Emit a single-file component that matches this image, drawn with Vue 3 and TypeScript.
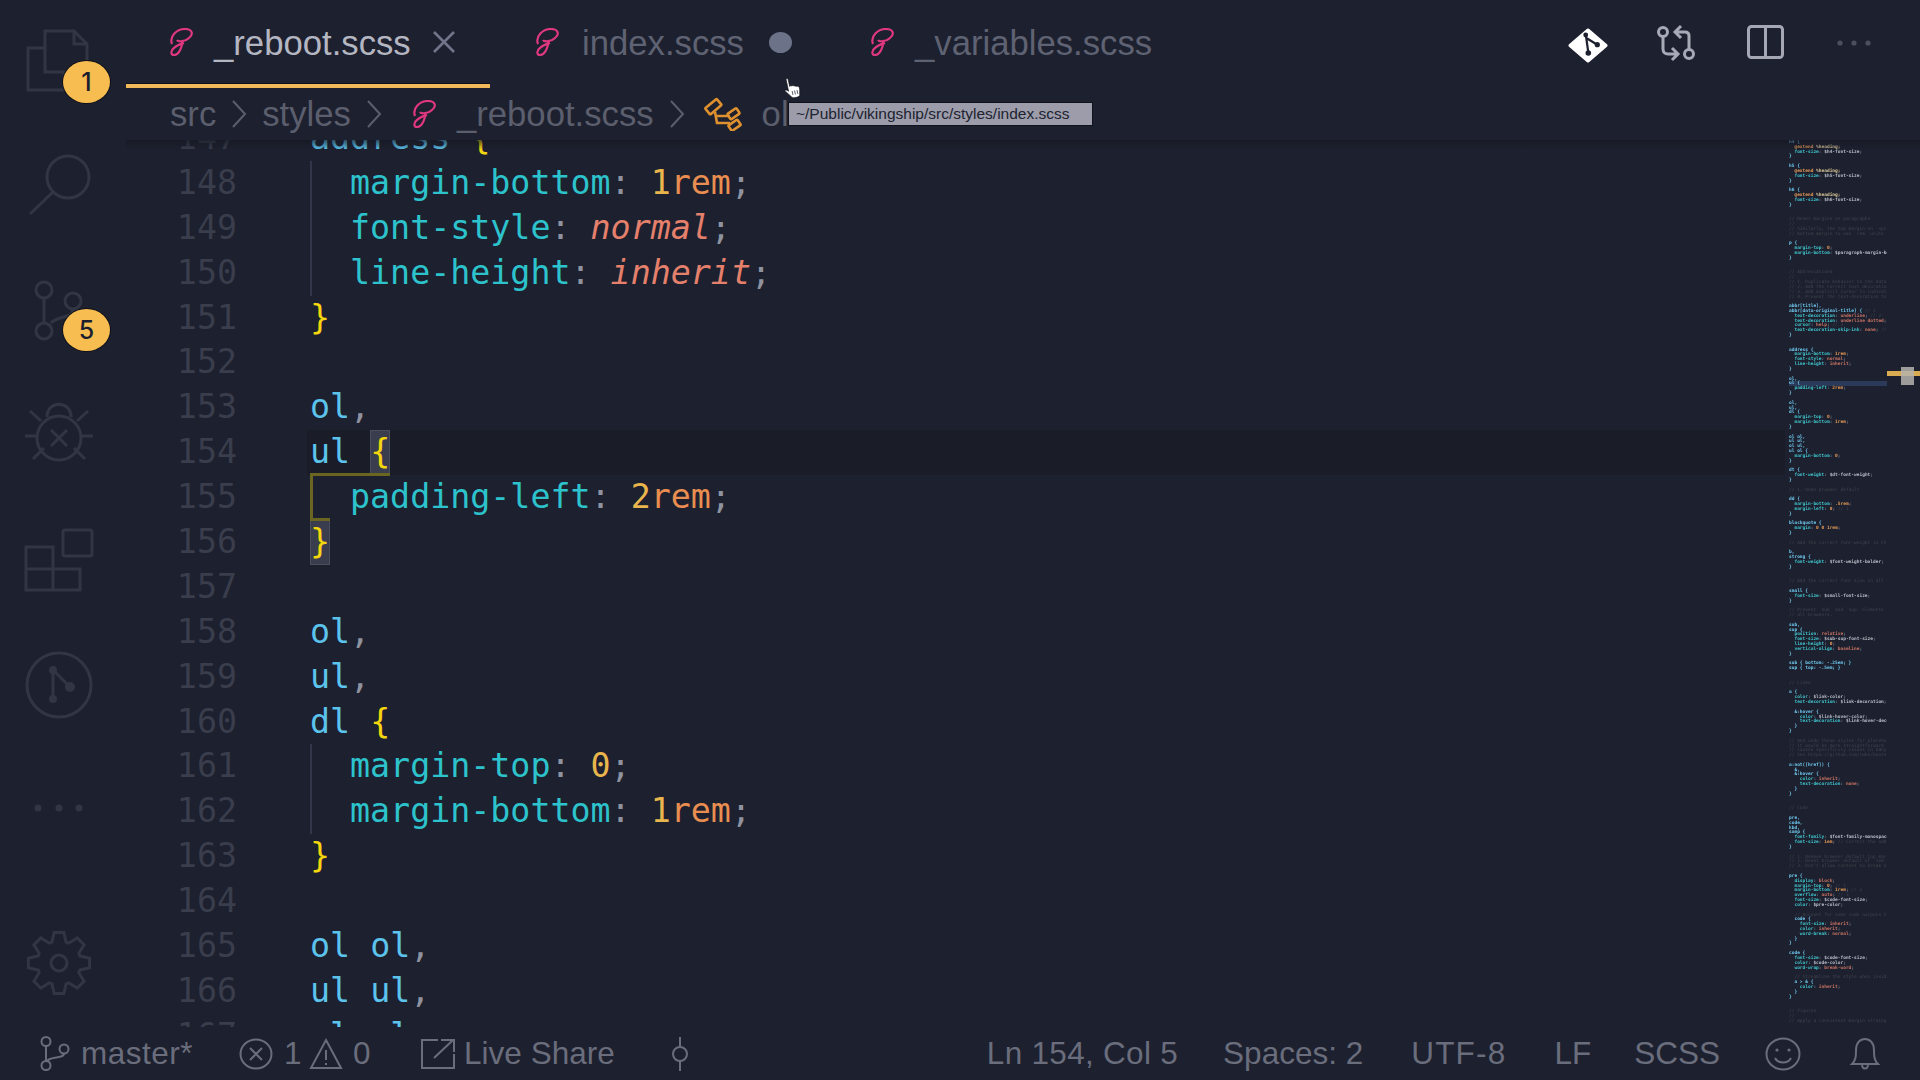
<script setup lang="ts">
type Tok = { t: string; c: string }
type Line = { n: number; toks: Tok[]; indent?: boolean; guideActive?: boolean; current?: boolean }

const T = (t: string, c: string): Tok => ({ t, c })
const sel = (s: string, tail: string, n: number): Line => ({ n, toks: [T(s, 'sel'), T(tail, 'pun')] })
const open = (s: string, n: number, match = false): Line => ({ n, toks: [T(s + ' ', 'sel'), T('{', match ? 'brc match' : 'brc')], current: match })
const close = (n: number, match = false): Line => ({ n, toks: [T('}', match ? 'brc match' : 'brc')] })
const blank = (n: number): Line => ({ n, toks: [] })
const num = (name: string, a: string, b: string, n: number, active = false): Line => ({
  n, indent: true, guideActive: active,
  toks: [T(name, 'prop'), T(': ', 'pun'), T(a, 'num'), T(b, 'unit'), T(';', 'pun')]
})
const word = (name: string, v: string, n: number): Line => ({
  n, indent: true, toks: [T(name, 'prop'), T(': ', 'pun'), T(v, 'val'), T(';', 'pun')]
})

const lines: Line[] = [
  open('address', 147),
  num('margin-bottom', '1', 'rem', 148),
  word('font-style', 'normal', 149),
  word('line-height', 'inherit', 150),
  close(151),
  blank(152),
  sel('ol', ',', 153),
  open('ul', 154, true),
  num('padding-left', '2', 'rem', 155, true),
  close(156, true),
  blank(157),
  sel('ol', ',', 158),
  sel('ul', ',', 159),
  open('dl', 160),
  num('margin-top', '0', '', 161),
  num('margin-bottom', '1', 'rem', 162),
  close(163),
  blank(164),
  sel('ol ol', ',', 165),
  sel('ul ul', ',', 166),
  sel('ol ul', ',', 167)
]

const source = `h4 {
  @extend %heading;
  font-size: $h4-font-size;
}

h5 {
  @extend %heading;
  font-size: $h5-font-size;
}

h6 {
  @extend %heading;
  font-size: $h6-font-size;
}


// Reset margins on paragraphs
//
// Similarly, the top margin on \`<p>\`s get reset. However, we also reset the
// bottom margin to use \`rem\` units instead of \`em\`.

p {
  margin-top: 0;
  margin-bottom: $paragraph-margin-bottom;
}


// Abbreviations
//
// 1. Duplicate behavior to the data-* attribute for our tooltip plugin
// 2. Add the correct text decoration in Chrome, Edge, IE, Opera, and Safari.
// 3. Add explicit cursor to indicate changed behavior.
// 4. Prevent the text-decoration to be skipped.

abbr[title],
abbr[data-original-title] { // 1
  text-decoration: underline; // 2
  text-decoration: underline dotted; // 2
  cursor: help; // 3
  text-decoration-skip-ink: none; // 4
}


address {
  margin-bottom: 1rem;
  font-style: normal;
  line-height: inherit;
}

ol,
ul {
  padding-left: 2rem;
}

ol,
ul,
dl {
  margin-top: 0;
  margin-bottom: 1rem;
}

ol ol,
ul ul,
ol ul,
ul ol {
  margin-bottom: 0;
}

dt {
  font-weight: $dt-font-weight;
}

// 1. Undo browser default

dd {
  margin-bottom: .5rem;
  margin-left: 0; // 1
}

blockquote {
  margin: 0 0 1rem;
}

// Add the correct font-weight in Chrome, Edge, and Safari

b,
strong {
  font-weight: $font-weight-bolder;
}


// Add the correct font size in all browsers

small {
  font-size: $small-font-size;
}

// Prevent \`sub\` and \`sup\` elements from affecting the line height in
// all browsers.

sub,
sup {
  position: relative;
  font-size: $sub-sup-font-size;
  line-height: 0;
  vertical-align: baseline;
}

sub { bottom: -.25em; }
sup { top: -.5em; }


// Links

a {
  color: $link-color;
  text-decoration: $link-decoration;

  &:hover {
    color: $link-hover-color;
    text-decoration: $link-hover-decoration;
  }
}

// And undo these styles for placeholder links/named anchors (without href).
// It would be more straightforward to just use a[href] in previous block, but that
// causes specificity issues in many other styles that are too complex to fix.
// See https://github.com/twbs/bootstrap/issues/19402

a:not([href]) {
  &,
  &:hover {
    color: inherit;
    text-decoration: none;
  }
}


// Code

pre,
code,
kbd,
samp {
  font-family: $font-family-monospace;
  font-size: 1em; // Correct the odd \`em\` font sizing in all browsers.
}

// 1. Remove browser default top margin
// 2. Reset browser default of \`1em\` to use \`rem\`s
// 3. Don't allow content to break outside

pre {
  display: block;
  margin-top: 0; // 1
  margin-bottom: 1rem; // 2
  overflow: auto; // 3
  font-size: $code-font-size;
  color: $pre-color;

  // Account for some code outputs that place code tags in pre tags
  code {
    font-size: inherit;
    color: inherit;
    word-break: normal;
  }
}

code {
  font-size: $code-font-size;
  color: $code-color;
  word-wrap: break-word;

  // Streamline the style when inside anchors to avoid broken underline and more
  a > & {
    color: inherit;
  }
}


// Figures
//
// Apply a consistent margin strategy (matches our type scale).`

function tokenize(line: string): Tok[] {
  if (!line.trim()) return []
  const lead = line.match(/^\s*/)?.[0] ?? ''
  const body = line.slice(lead.length)
  const out: Tok[] = lead ? [T(lead, 'm-pun')] : []
  if (body.startsWith('//')) return [...out, T(body, 'm-com')]
  if (body.startsWith('@extend')) return [...out, T('@extend ', 'm-unit'), T(body.slice(8), 'm-ext')]
  const m = body.match(/^([a-z-]+)(:\s+)([^;]*)(;?)(.*)$/)
  if (m && !body.includes('{')) {
    const v = m[3].startsWith('$') ? 'm-var' : /^[\d.-]/.test(m[3]) ? 'm-unit' : 'm-val'
    return [...out, T(m[1], 'm-prop'), T(m[2], 'm-pun'), T(m[3], v), T(m[4], 'm-pun'), T(m[5], 'm-com')]
  }
  const c = body.indexOf('//')
  if (c > 0) return [...out, T(body.slice(0, c), 'm-sel'), T(body.slice(c), 'm-com')]
  return [...out, T(body, 'm-sel')]
}

const miniLines = source.split('\n').map((s, i) => ({ id: i, toks: tokenize(s), hit: s === 'ul {' && i < 60 }))

function gearPath(): string {
  const cx = 35, cy = 33, teeth = 8
  const pts: string[] = []
  for (let i = 0; i < teeth; i++) {
    const a = (i / teeth) * Math.PI * 2 - Math.PI / 2
    const s = (Math.PI * 2) / teeth
    const p = (r: number, d: number) => `${(cx + r * Math.cos(a + d)).toFixed(1)} ${(cy + r * Math.sin(a + d)).toFixed(1)}`
    pts.push(`${p(22, -s * 0.42)} L${p(31, -s * 0.2)} L${p(31, s * 0.2)} L${p(22, s * 0.42)}`)
  }
  return 'M' + pts.join(' L') + ' Z'
}
const gear = gearPath()
</script>

<template>
  <div class="window">
    <div class="body">
      <aside class="activity">
        <div class="act">
          <svg viewBox="0 0 70 70" class="ico"><path d="M21 21H4V63H40V45M21 4H50L63 17V45H21ZM50 4V17H63" /></svg>
          <span class="badge">1</span>
        </div>
        <div class="act">
          <svg viewBox="0 0 70 70" class="ico"><circle cx="44" cy="26" r="21" /><path d="M29 41L6 63" /></svg>
        </div>
        <div class="act">
          <svg viewBox="0 0 70 70" class="ico"><circle cx="20" cy="15" r="8" /><circle cx="20" cy="56" r="8" /><circle cx="49" cy="26" r="8" /><path d="M20 23V48M49 34C49 44 34 40 27 48" /></svg>
          <span class="badge">5</span>
        </div>
        <div class="act">
          <svg viewBox="0 0 70 70" class="ico"><ellipse cx="35" cy="39" rx="22" ry="22" /><path d="M23 18C23 1 47 1 47 18M6 12L17 22M64 12L53 22M1 37H13M57 37H69M9 60L20 49M61 60L50 49M27 31L43 47M43 31L27 47" /></svg>
        </div>
        <div class="act">
          <svg viewBox="0 0 70 70" class="ico"><rect x="39" y="7" width="29" height="26" rx="2" /><path d="M2 24H29V67H2ZM2 46H56V67H29" /></svg>
        </div>
        <div class="act">
          <svg viewBox="0 0 70 70" class="ico"><circle cx="35" cy="38" r="32" /><path d="M29 23V52M29 23L46 40" /><circle cx="29" cy="23" r="4" class="fill" /><circle cx="46" cy="40" r="5" class="fill" /><circle cx="29" cy="52" r="4" class="fill" /></svg>
        </div>
        <div class="act">
          <svg viewBox="0 0 70 70" class="ico"><circle cx="14" cy="37" r="3.5" class="fill" /><circle cx="35" cy="37" r="3.5" class="fill" /><circle cx="55" cy="37" r="3.5" class="fill" /></svg>
        </div>
        <div class="act act-last">
          <svg viewBox="0 0 70 70" class="ico"><path :d="gear" /><circle cx="35" cy="33" r="8" /></svg>
        </div>
      </aside>

      <main class="main">
        <div class="tabs">
          <div class="tab tab-active">
            <svg viewBox="0 0 26 28" class="sass"><path d="M4 16C1 8 9 1 17 1C24 1 26 6 21 10C17 14 10 14 9 12M14 12C15 18 11 27 6 27C2 27 3 22 6 20C9 17 13 16 16 15" /></svg>
            <span class="tab-name">_reboot.scss</span>
            <svg viewBox="0 0 24 24" class="close"><path d="M2 2L22 22M22 2L2 22" /></svg>
          </div>
          <div class="tab tab-two">
            <svg viewBox="0 0 26 28" class="sass"><path d="M4 16C1 8 9 1 17 1C24 1 26 6 21 10C17 14 10 14 9 12M14 12C15 18 11 27 6 27C2 27 3 22 6 20C9 17 13 16 16 15" /></svg>
            <span class="tab-name dim">index.scss</span>
            <span class="dirty"></span>
          </div>
          <div class="tab">
            <svg viewBox="0 0 26 28" class="sass"><path d="M4 16C1 8 9 1 17 1C24 1 26 6 21 10C17 14 10 14 9 12M14 12C15 18 11 27 6 27C2 27 3 22 6 20C9 17 13 16 16 15" /></svg>
            <span class="tab-name dim">_variables.scss</span>
          </div>
          <div class="tab-actions">
            <svg viewBox="0 0 40 35" class="a-git">
              <path d="M20 2L38 17.5L20 33L2 17.5Z" class="dia" />
              <path d="M17.7 6L20.3 24.3M18.3 10L29.3 16.7" class="dia-line" />
              <circle cx="17.7" cy="7" r="2.4" class="dia-dot" /><circle cx="20.3" cy="25" r="2.8" class="dia-dot" /><circle cx="29.3" cy="16.700" r="2.6" class="dia-dot" />
            </svg>
            <svg viewBox="0 0 40 35" class="a-cmp">
              <circle cx="6" cy="5" r="4.500" /><circle cx="32" cy="27" r="4.500" />
              <path d="M6 10V22C6 25 8 27 11 27H21M15 21L21 27L15 33M32 22V9C32 6 30 5 28 5H18M24 -1L18 5L24 11" />
            </svg>
            <svg viewBox="0 0 37 34" class="a-split"><rect x="1.5" y="1.5" width="34" height="31" rx="3" /><path d="M18.5 1.5V32.5" /></svg>
            <svg viewBox="0 0 36 8" class="a-more"><circle cx="4" cy="4" r="2.6" /><circle cx="18" cy="4" r="2.6" /><circle cx="32" cy="4" r="2.6" /></svg>
          </div>
        </div>

        <div class="crumbs">
          <span>src</span>
          <svg viewBox="0 0 16 28" class="chev"><path d="M2 1L14 14L2 27" /></svg>
          <span>styles</span>
          <svg viewBox="0 0 16 28" class="chev"><path d="M2 1L14 14L2 27" /></svg>
          <svg viewBox="0 0 26 28" class="sass crumb-sass"><path d="M4 16C1 8 9 1 17 1C24 1 26 6 21 10C17 14 10 14 9 12M14 12C15 18 11 27 6 27C2 27 3 22 6 20C9 17 13 16 16 15" /></svg>
          <span class="crumb-file">_reboot.scss</span>
          <svg viewBox="0 0 16 28" class="chev"><path d="M2 1L14 14L2 27" /></svg>
          <svg viewBox="0 0 38 34" class="struct">
            <rect x="2" y="6" width="15" height="8" rx="1" transform="rotate(-40 9 10)" />
            <rect x="24" y="13.500" width="11" height="6.500" rx="1" transform="rotate(-35 29.500 16.700)" />
            <rect x="25" y="25" width="11" height="6.500" rx="1" transform="rotate(-35 30.500 28.200)" />
            <path d="M11 15L13 26H26M13 19H26" />
          </svg>
          <span class="crumb-ol">ol</span>
          <div class="tooltip">~/Public/vikingship/src/styles/index.scss</div>
          <svg viewBox="0 0 18 22" class="cursor">
            <path d="M5 1C6 0 7 1 7 2V9L8 8.500L9 9V8.500L11 9V9L13 10L15 10.500C16.500 11 16.500 13 16 15L15 20C14 21.500 8 21.500 7 20L2 13C1 11.500 2.500 11 4 12.500L5 13.500Z" />
            <path d="M8.500 14V18M11 14V18M13.500 14V18" class="cursor-lines" />
          </svg>
        </div>

        <div class="editor">
          <div class="lines">
            <div v-for="l in lines" :key="l.n" class="row">
              <span class="gutter">{{ l.n }}</span>
              <div class="code" :class="{ current: l.current }">
                <span v-if="l.indent" class="indent" :class="{ 'indent-active': l.guideActive }"></span>
                <span v-for="(tk, i) in l.toks" :key="i" :class="tk.c">{{ tk.t }}</span>
              </div>
            </div>
          </div>
          <div class="minimap">
            <div class="mini-text">
              <div v-for="m in miniLines" :key="m.id" class="mini-line" :class="{ hit: m.hit }">
                <span v-for="(tk, i) in m.toks" :key="i" :class="tk.c">{{ tk.t }}</span>
              </div>
            </div>
            <div class="ruler-mark"></div>
            <div class="ruler-slider"></div>
          </div>
        </div>
      </main>
    </div>

    <footer class="status">
      <svg viewBox="0 0 30 35" class="s-branch"><circle cx="7" cy="5.500" r="4.500" /><circle cx="7" cy="29.500" r="4.500" /><circle cx="25" cy="13" r="4.500" /><path d="M7 10V25M25 17.500C25 23 12 20 8 25" /></svg>
      <span class="s-master">master*</span>
      <svg viewBox="0 0 34 32" class="s-err"><ellipse cx="17" cy="16" rx="15.500" ry="14.500" /><path d="M11 10L23 22M23 10L11 22" /></svg>
      <span class="s-one">1</span>
      <svg viewBox="0 0 34 32" class="s-warn"><path d="M17 2L32 30H2ZM17 12V22M17 25V27" /></svg>
      <span class="s-zero">0</span>
      <svg viewBox="0 0 36 32" class="s-share"><path d="M18 2H2V30H34V16M14 20L33 2M21 2H34V14" /></svg>
      <span class="s-live">Live Share</span>
      <svg viewBox="0 0 18 34" class="s-commit"><circle cx="9" cy="17" r="7" /><path d="M9 0V10M9 24V34" /></svg>
      <div class="s-right">
        <span class="g-ln">Ln 154, Col 5</span>
        <span class="g-spaces">Spaces: 2</span>
        <span class="g-utf">UTF-8</span>
        <span class="g-lf">LF</span>
        <span class="g-scss">SCSS</span>
        <svg viewBox="0 0 36 34" class="s-smile"><ellipse cx="18" cy="17" rx="16.500" ry="15.500" /><path d="M10 21C13 27 23 27 26 21" /><circle cx="12" cy="13" r="1.600" class="s-fill" /><circle cx="24" cy="13" r="1.600" class="s-fill" /></svg>
        <svg viewBox="0 0 30 34" class="s-bell"><path d="M2 27C6 23 6 19 6 13C6 6 10 2 15 2C20 2 24 6 24 13C24 19 24 23 28 27ZM12 27C12 33 18 33 18 27" /></svg>
      </div>
    </footer>
  </div>
</template>

<style>
html, body { margin: 0; background: #1d202e; }
</style>

<style scoped>
.window {
  width: 1920px;
  height: 1080px;
  display: flex;
  flex-direction: column;
  overflow: hidden;
  background: #1d202e;
  font-family: "Liberation Sans", Arial, sans-serif;
}
.body { flex: 1; min-height: 0; display: flex; }

.activity {
  width: 126px;
  flex: none;
  display: flex;
  flex-direction: column;
}
.act {
  position: relative;
  height: 124px;
  flex: none;
  display: flex;
  align-items: center;
  padding-left: 24px;
}
.act-last { margin-top: auto; }
.ico { width: 70px; height: 70px; fill: none; stroke: #323644; stroke-width: 3; overflow: visible; }
.ico .fill { fill: #323644; stroke: none; }
.badge {
  position: absolute;
  left: 63px;
  top: 61px;
  width: 47px;
  height: 42px;
  border-radius: 50%;
  background: #f7bd50;
  color: #1c1f2d;
  font-family: Inter, sans-serif;
  font-size: 25px;
  font-weight: 500;
  display: flex;
  align-items: center;
  justify-content: center;
  box-shadow: 0 0 0 1px #10121b;
}

.main { flex: 1; min-width: 0; display: flex; flex-direction: column; }

.tabs { height: 88px; flex: none; display: flex; }
.tab {
  height: 88px;
  box-sizing: border-box;
  padding: 0 0 4px 42px;
  display: flex;
  align-items: center;
  flex: none;
}
.tab-active {
  width: 364px;
  border-bottom: 4px solid #f0b95a;
  padding-bottom: 0;
  box-shadow: 0 -1px 0 #0e1020 inset;
}
.tab-two { width: 337px; padding-left: 44px; }
.tab-two .tab-name { margin-left: 22px; }
.sass { width: 26px; height: 28px; fill: none; stroke: #e0387f; stroke-width: 2.2; flex: none; }
.tab-name {
  margin-left: 20px;
  padding-top: 3px;
  font-size: 34.700px;
  color: #b4b6c2;
  white-space: nowrap;
}
.tab-name.dim { color: #5e6272; }
.close { width: 24px; height: 24px; margin-left: 21px; fill: none; stroke: #72758a; stroke-width: 2.6; flex: none; }
.dirty { width: 23px; height: 21px; border-radius: 50%; background: #6c7389; margin-left: 25px; flex: none; }
.tab-actions { margin-left: auto; display: flex; align-items: center; height: 86px; position: relative; }
.a-git { width: 40px; height: 35px; margin-right: 49px; margin-top: 4px; }
.dia { fill: #fff; stroke: #fff; stroke-width: 3; stroke-linejoin: round; }
.dia-line { fill: none; stroke: #1d202e; stroke-width: 2.2; }
.dia-dot { fill: #1d202e; }
.a-cmp { width: 40px; height: 35px; margin-right: 50px; margin-top: 3px; fill: none; stroke: #a7a9b6; stroke-width: 3; overflow: visible; }
.a-split { width: 37px; height: 34px; margin-right: 52px; margin-top: -2px; fill: none; stroke: #a5a7b4; stroke-width: 3; }
.a-more { width: 36px; height: 8px; margin-right: 48px; fill: #4b4f5e; }

.crumbs {
  position: relative;
  height: 52px;
  flex: none;
  padding-left: 44px;
  display: flex;
  align-items: center;
  color: #5b5e6d;
  font-size: 34.700px;
  white-space: nowrap;
}
.chev { width: 16px; height: 28px; margin: 0 15px; fill: none; stroke: #5b5e6d; stroke-width: 2; flex: none; }
.crumb-sass { margin-left: 14px; margin-right: 20px; }
.struct { width: 38px; height: 34px; margin-left: 4px; fill: none; stroke: #e0912f; stroke-width: 2.600; flex: none; }
.crumb-ol { margin-left: 20px; }
.tooltip {
  position: absolute;
  left: 663px;
  top: 15px;
  box-sizing: border-box;
  width: 303px;
  height: 22px;
  background: #9c9cab;
  color: #20232f;
  font-size: 15.500px;
  line-height: 22px;
  padding-left: 7px;
  box-shadow: 0 0 0 1px #11131c;
}
.cursor {
  position: absolute;
  left: 657px;
  top: -11px;
  width: 18px;
  height: 22px;
  fill: #fff;
  stroke: #15171f;
  stroke-width: 0.6;
  transform: rotate(-12deg);
}
.cursor-lines { fill: none; stroke: #555a66; stroke-width: 0.9; }

.editor {
  flex: 1;
  min-height: 0;
  display: flex;
  overflow: hidden;
  position: relative;
}
.editor::before {
  content: "";
  position: absolute;
  left: 0;
  right: 0;
  top: 0;
  height: 10px;
  background: linear-gradient(#151722aa, #15172200);
  z-index: 2;
}
.lines {
  flex: 1;
  min-width: 0;
  margin-top: -24px;
  font-family: "DejaVu Sans Mono", "Liberation Mono", monospace;
  font-size: 33.300px;
}
.row { display: flex; height: 44.900px; line-height: 44.900px; white-space: pre; }
.gutter { width: 111px; flex: none; text-align: right; color: #393d4c; }
.code { flex: 1; margin-left: 70px; padding-left: 3px; display: flex; }
.current { background: #1a1c28; }
.indent { width: 40px; height: 100%; flex: none; box-sizing: border-box; border-left: 2px solid #32364a; position: relative; }
.indent-active { border-left: 3px solid #6a6520; }
.indent-active::before, .indent-active::after {
  content: "";
  position: absolute;
  left: -3px;
  border-top: 3px solid #6a6520;
}
.indent-active::before { top: -2px; width: 80px; }
.indent-active::after { bottom: -1px; width: 20px; }
.sel { color: #5cc3ec; }
.prop { color: #2dc3cc; }
.num { color: #e8b64d; }
.unit { color: #e98e50; }
.val { color: #e5806c; font-style: italic; }
.pun { color: #8f93a0; }
.brc { color: #f4d60f; }
.match { background: #393d4d; box-shadow: inset 0 0 0 1px #4a4e5c; width: 20px; }

.minimap { width: 135px; flex: none; position: relative; overflow: hidden; }
.mini-text {
  width: 102px;
  padding-left: 4px;
  box-sizing: border-box;
  overflow: hidden;
  font-family: "DejaVu Sans Mono", monospace;
  font-size: 4.500px;
  font-weight: 700;
  filter: blur(0.3px);
}
.mini-line { height: 4.830px; line-height: 4.830px; white-space: pre; }
.hit { background: #2a3a58; }
.m-sel { color: #6ec8ee; }
.m-prop { color: #3fc3cc; }
.m-val { color: #c97363; }
.m-var { color: #b9bcc8; }
.m-ext { color: #d9c79a; }
.m-unit { color: #e69a56; }
.m-pun { color: #7d8190; }
.m-com { color: #41454f; font-weight: 400; }
.ruler-mark { position: absolute; left: 102px; right: 0; top: 231px; height: 5px; background: #d9ac52; }
.ruler-slider { position: absolute; left: 116px; width: 13px; top: 227px; height: 18px; background: #b4b3ad; opacity: .85; }

.status {
  height: 53px;
  flex: none;
  display: flex;
  align-items: center;
  padding-left: 39px;
  color: #6a6d7c;
  font-size: 31.500px;
  white-space: nowrap;
}
.status svg { fill: none; stroke: #6a6d7c; stroke-width: 2; flex: none; overflow: visible; }
.s-branch { width: 30px; height: 35px; }
.s-master { margin-left: 12px; letter-spacing: 0.500px; }
.s-err { width: 34px; height: 32px; margin-left: 46px; }
.s-one { margin-left: 11px; }
.s-warn { width: 34px; height: 32px; margin-left: 7.500px; }
.s-zero { margin-left: 10px; }
.s-share { width: 36px; height: 32px; margin-left: 49.500px; }
.s-live { margin-left: 8px; }
.s-commit { width: 18px; height: 34px; margin-left: 56.500px; }
.s-right { margin-left: auto; display: flex; align-items: center; padding-right: 40px; }
.g-ln { letter-spacing: 0.300px; }
.g-spaces { margin-left: 45px; }
.g-utf { margin-left: 48px; letter-spacing: 1.200px; }
.g-lf { margin-left: 48px; }
.g-scss { margin-left: 43px; }
.s-smile { width: 36px; height: 34px; margin-left: 45px; }
.s-bell { width: 30px; height: 34px; margin-left: 49px; }
.status .s-fill { fill: #6a6d7c; stroke: none; }
</style>
